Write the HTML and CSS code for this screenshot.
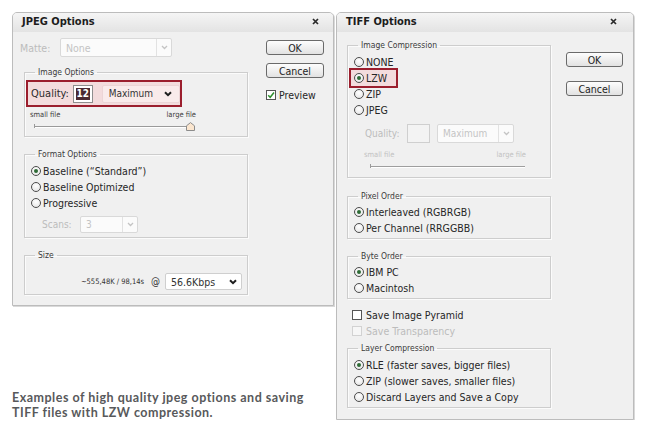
FILE: index.html
```html
<!DOCTYPE html>
<html>
<head>
<meta charset="utf-8">
<link rel="stylesheet" href="styles.css">
</head>
<body>
<div class="page">
  <div class="left">
    <section class="dialog jpeg">
      <header class="titlebar">
        <span class="title">JPEG Options</span>
        <svg class="close" width="7" height="7" viewBox="0 0 7 7"><path d="M1 1L6 6M6 1L1 6" stroke="#2a2a2a" stroke-width="1.7" fill="none"/></svg>
      </header>
      <div class="body">
        <div class="main">
          <div class="matte-row">
            <span class="matte-lbl dis-text">Matte:</span>
            <div class="select dis matte-sel">
              <span class="val">None</span>
              <span class="arrow"><svg width="7" height="5" viewBox="0 0 7 5"><path d="M1 1L3.5 3.5L6 1" stroke="#c4c4c4" stroke-width="1.3" fill="none"/></svg></span>
            </div>
          </div>

          <fieldset class="group">
            <legend>Image Options</legend>
            <div class="gc img-gc">
              <div class="hl quality-row">
                <span class="q-lbl">Quality:</span>
                <div class="q-input"><span class="seltext">12</span></div>
                <div class="select q-sel">
                  <span class="val">Maximum</span>
                  <span class="arrow"><svg width="8" height="6" viewBox="0 0 8 6"><path d="M1 1.2L4 4.2L7 1.2" stroke="#1e1e1e" stroke-width="2" fill="none"/></svg></span>
                </div>
              </div>
              <div class="slider">
                <div class="slider-labels"><span>small file</span><span>large file</span></div>
                <div class="track">
                  <svg class="thumb" width="9" height="9" viewBox="0 0 9 9"><path d="M0.5 3.8L4.5 0.6L8.5 3.8V8.5H0.5Z" fill="#fbe6cf" stroke="#8c8c8c" stroke-width="1"/></svg>
                </div>
              </div>
            </div>
          </fieldset>

          <fieldset class="group spaced">
            <legend>Format Options</legend>
            <div class="gc fmt-gc">
              <div class="opt"><span class="radio on"></span><span>Baseline (“Standard”)</span></div>
              <div class="opt"><span class="radio"></span><span>Baseline Optimized</span></div>
              <div class="opt"><span class="radio"></span><span>Progressive</span></div>
              <div class="scans-row">
                <span class="scans-lbl dis-text">Scans:</span>
                <div class="select dis scans-sel">
                  <span class="val">3</span>
                  <span class="arrow"><svg width="7" height="5" viewBox="0 0 7 5"><path d="M1 1L3.5 3.5L6 1" stroke="#c4c4c4" stroke-width="1.3" fill="none"/></svg></span>
                </div>
              </div>
            </div>
          </fieldset>

          <fieldset class="group spaced">
            <legend>Size</legend>
            <div class="gc size-gc">
              <span class="est">~555,48K / 98,14s</span>
              <span class="at">@</span>
              <div class="select speed-sel">
                <span class="val">56.6Kbps</span>
                <span class="arrow"><svg width="8" height="6" viewBox="0 0 8 6"><path d="M1 1.2L4 4.2L7 1.2" stroke="#1e1e1e" stroke-width="2" fill="none"/></svg></span>
              </div>
            </div>
          </fieldset>
        </div>

        <div class="side">
          <div class="btn">OK</div>
          <div class="btn">Cancel</div>
          <div class="check-row">
            <span class="checkbox"><svg width="8" height="8" viewBox="0 0 8 8"><path d="M1.2 4.2L3.2 6.3L7 1.5" stroke="#2f8f2f" stroke-width="1.5" fill="none"/></svg></span>
            <span>Preview</span>
          </div>
        </div>
      </div>
    </section>

    <p class="caption">Examples of high quality jpeg options and saving<br>TIFF files with LZW compression.</p>
  </div>

  <section class="dialog tiff">
    <header class="titlebar">
      <span class="title">TIFF Options</span>
      <svg class="close" width="7" height="7" viewBox="0 0 7 7"><path d="M1 1L6 6M6 1L1 6" stroke="#2a2a2a" stroke-width="1.7" fill="none"/></svg>
    </header>
    <div class="body">
      <div class="main">
        <fieldset class="group">
          <legend>Image Compression</legend>
          <div class="gc comp-gc">
            <div class="opt"><span class="radio"></span><span>NONE</span></div>
            <div class="opt hl lzw"><span class="radio on"></span><span>LZW</span></div>
            <div class="opt"><span class="radio"></span><span>ZIP</span></div>
            <div class="opt"><span class="radio"></span><span>JPEG</span></div>
            <div class="tq-row">
              <span class="tq-lbl dis-text">Quality:</span>
              <div class="tq-input"></div>
              <div class="select dis tq-sel">
                <span class="val">Maximum</span>
                <span class="arrow"><svg width="7" height="5" viewBox="0 0 7 5"><path d="M1 1L3.5 3.5L6 1" stroke="#c4c4c4" stroke-width="1.3" fill="none"/></svg></span>
              </div>
            </div>
            <div class="slider dis-slider">
              <div class="slider-labels"><span>small file</span><span>large file</span></div>
              <div class="track"></div>
            </div>
          </div>
        </fieldset>

        <fieldset class="group po">
          <legend>Pixel Order</legend>
          <div class="gc list-gc">
            <div class="opt"><span class="radio on"></span><span>Interleaved (RGBRGB)</span></div>
            <div class="opt"><span class="radio"></span><span>Per Channel (RRGGBB)</span></div>
          </div>
        </fieldset>

        <fieldset class="group spaced">
          <legend>Byte Order</legend>
          <div class="gc list-gc">
            <div class="opt"><span class="radio on"></span><span>IBM PC</span></div>
            <div class="opt"><span class="radio"></span><span>Macintosh</span></div>
          </div>
        </fieldset>

        <div class="checks">
          <div class="opt"><span class="checkbox"></span><span>Save Image Pyramid</span></div>
          <div class="opt dis-text"><span class="checkbox dis-box"></span><span>Save Transparency</span></div>
        </div>

        <fieldset class="group lc">
          <legend>Layer Compression</legend>
          <div class="gc lc-gc">
            <div class="opt"><span class="radio on"></span><span>RLE (faster saves, bigger files)</span></div>
            <div class="opt"><span class="radio"></span><span>ZIP (slower saves, smaller files)</span></div>
            <div class="opt"><span class="radio"></span><span>Discard Layers and Save a Copy</span></div>
          </div>
        </fieldset>
      </div>

      <div class="side">
        <div class="btn">OK</div>
        <div class="btn">Cancel</div>
      </div>
    </div>
  </section>
</div>
</body>
</html>
```

FILE: styles.css
```css
* { box-sizing: border-box; }

body {
  margin: 0;
  background: #fff;
  font-family: "DejaVu Sans Condensed", "DejaVu Sans", "Liberation Sans", sans-serif;
  font-size: 10px;
  color: #262626;
}

.page {
  display: flex;
  align-items: stretch;
  gap: 2px;
  padding: 12px 0 0 12px;
}

.left {
  width: 322px;
  display: flex;
  flex-direction: column;
}

.caption {
  margin: auto 0 0 0;
  font-family: Lato, "Open Sans", sans-serif;
  font-weight: 700;
  font-size: 12.5px;
  line-height: 15px;
  letter-spacing: 0.5px;
  color: #58595b;
}

/* dialogs */
.dialog {
  background: #f0f0f0;
  border: 1px solid #bcbcbc;
  border-radius: 5px 5px 0 0;
  box-shadow: 1px 1px 0 #d9d9d9;
  display: flex;
  flex-direction: column;
}
.jpeg { height: 294px; }
.tiff { width: 298px; }

.titlebar {
  height: 19px;
  flex: none;
  display: flex;
  align-items: center;
  justify-content: space-between;
  padding: 0 14px 2px 9px;
  background: linear-gradient(#f5f5f5, #e3e3e3);
  border-radius: 4px 4px 0 0;
}
.tiff .titlebar { padding-right: 16px; }
.title {
  font-weight: bold;
  font-size: 11px;
  color: #1c1c1c;
}

.body { display: flex; }
.jpeg .body { padding: 6px 9px 0 7px; }
.tiff .body { padding: 8px 10px 0 10px; }

.main { display: flex; flex-direction: column; }
.jpeg .main { width: 228px; }
.tiff .main { width: 204px; }

.side {
  margin-left: auto;
  display: flex;
  flex-direction: column;
}
.jpeg .side { width: 58px; margin-top: 2px; }
.tiff .side { width: 57px; margin-top: 12px; }

.btn {
  height: 15px;
  border: 1px solid #6a6a6a;
  border-radius: 3px;
  background: linear-gradient(#fdfdfd, #e2e2e2);
  display: flex;
  align-items: center;
  justify-content: center;
  font-size: 10.5px;
  color: #1e1e1e;
}
.jpeg .btn + .btn { margin-top: 8px; }
.tiff .btn + .btn { margin-top: 14px; }

.check-row {
  display: flex;
  align-items: center;
  gap: 3px;
  height: 12px;
  margin-top: 11px;
  font-size: 10.5px;
}

.checkbox {
  width: 10px;
  height: 10px;
  flex: none;
  border: 1px solid #555;
  background: #fff;
  display: flex;
  align-items: center;
  justify-content: center;
}
.dis-box { border-color: #d2d2d2; background: #f6f6f6; }

.dis-text { color: #bcbcbc; }

/* groups */
.group {
  margin: 0;
  padding: 0;
  min-width: 0;
  border: 1px solid #cdcdcd;
  box-shadow: inset 1px 1px 0 #fbfbfb, 1px 1px 0 #fbfbfb;
}
.group legend {
  margin-left: 10px;
  padding: 0 3px;
  font-size: 8.5px;
  line-height: 10px;
  color: #3a3a3a;
}
.jpeg .group { margin-left: 4px; width: 224px; margin-top: 10px; }
.jpeg .group.spaced { margin-top: 12px; }

/* matte */
.matte-row {
  display: flex;
  align-items: center;
  height: 19px;
}
.matte-lbl { width: 40px; font-size: 10.5px; }

/* selects */
.select {
  display: flex;
  align-items: center;
  background: #fff;
  border: 1px solid #cfcfcf;
  border-radius: 2px;
}
.select .val {
  flex: 1;
  padding-left: 5px;
  white-space: nowrap;
  overflow: hidden;
}
.select .arrow {
  align-self: stretch;
  display: flex;
  align-items: center;
  justify-content: center;
  width: 15px;
}
.select.dis { background: #fbfbfb; border-color: #d9d9d9; color: #c4c4c4; }
.select.dis .arrow { border-left: 1px solid #e2e2e2; }

.matte-sel { width: 112px; height: 19px; font-size: 10.5px; }
.scans-sel { width: 58px; height: 17px; }
.tq-sel { width: 77px; height: 19px; margin-left: 7px; }

/* quality highlight */
.hl {
  border: 2px solid #9b1e2d;
  background: #f3dcdd;
}
.img-gc { padding: 3px 0 8px 1px; }
.quality-row {
  width: 156px;
  height: 27px;
  display: flex;
  align-items: center;
  padding-left: 3px;
}
.q-lbl { font-size: 11px; color: #2a2a2a; }
.q-input {
  width: 20px;
  height: 18px;
  margin-left: 4px;
  border: 1px solid #8e8e8e;
  background: #fff;
  display: flex;
  align-items: center;
  justify-content: center;
}
.seltext {
  background: #4a2a33;
  color: #fff;
  font-weight: bold;
  font-size: 10px;
  line-height: 12px;
  padding: 0 1px;
}
.q-sel {
  margin-left: 9px;
  width: 79px;
  height: 18px;
  background: #f9ebeb;
  border-color: #ecd5d6;
  color: #333;
}
.q-sel .val { padding-left: 6px; }
.q-sel .arrow { width: 22px; }

/* slider */
.slider { margin: 3px 0 0 4px; width: 166px; }
.slider-labels {
  display: flex;
  justify-content: space-between;
  font-size: 7.5px;
  line-height: 9px;
  color: #3c3c3c;
}
.track {
  position: relative;
  height: 2px;
  margin: 7px 3px 0 4px;
  border-top: 1px solid #9a9a9a;
  border-bottom: 1px solid #fff;
}
.track::before {
  content: "";
  position: absolute;
  left: 0;
  top: -3px;
  width: 1px;
  height: 4px;
  background: #9a9a9a;
}
.thumb { position: absolute; left: 152px; top: -5px; }

.dis-slider { margin: 7px 0 0 10px; width: 162px; }
.dis-slider .slider-labels { color: #c2c2c2; }
.dis-slider .track { margin: 7px 1px 0 6px; border-top-color: #9e9e9e; }

/* radio options */
.opt {
  display: flex;
  align-items: center;
  gap: 2px;
  height: 16px;
  font-size: 10.5px;
  white-space: nowrap;
}
.radio {
  width: 10px;
  height: 10px;
  flex: none;
  border-radius: 50%;
  border: 1px solid #4c4c4c;
  background: radial-gradient(circle at 50% 35%, #ffffff, #e2e2e2);
  display: flex;
  align-items: center;
  justify-content: center;
}
.radio.on::after {
  content: "";
  width: 4px;
  height: 4px;
  border-radius: 50%;
  background: #2e6b36;
}

.fmt-gc { padding: 4px 0 4px 6px; }
.scans-row {
  display: flex;
  align-items: center;
  margin-top: 5px;
  height: 17px;
}
.scans-lbl { margin-left: 11px; width: 38px; }

.size-gc {
  display: flex;
  align-items: center;
  justify-content: flex-end;
  padding: 13px 5px 4px 0;
}
.est { font-size: 7.5px; color: #333; }
.at { margin: 0 5px 0 7px; font-size: 10px; color: #333; }
.speed-sel { width: 77px; height: 17px; font-size: 10.5px; color: #333; }
.speed-sel .arrow { width: 16px; }

/* tiff */
.comp-gc { padding: 4px 0 9px 6px; }
.lzw {
  width: 49px;
  height: 20px;
  margin: -2px 0 -2px -5px;
  padding-left: 3px;
}
.tq-row {
  display: flex;
  align-items: center;
  height: 19px;
  margin-top: 6px;
}
.tq-lbl { margin-left: 11px; width: 42px; }
.tq-input {
  width: 23px;
  height: 19px;
  border: 1px solid #cfcfcf;
  background: #f3f3f3;
}

.tiff .group.po { margin-top: 13px; }
.tiff .group.spaced { margin-top: 12px; }
.list-gc { padding: 3px 0 2px 6px; }

.checks { margin-top: 8px; padding-left: 5px; }
.checks .opt { gap: 4px; }

.tiff .group.lc { margin-top: 4px; }
.lc-gc { padding: 4px 0 2px 6px; }
.tiff .body { padding-bottom: 11px; }
```
